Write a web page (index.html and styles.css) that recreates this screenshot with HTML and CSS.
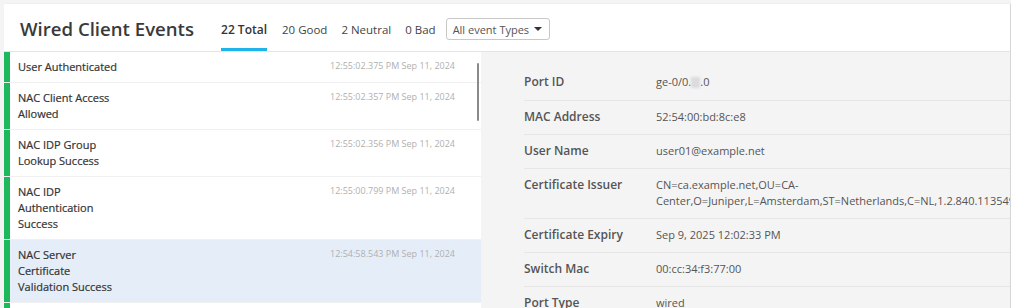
FILE: index.html
```html
<!DOCTYPE html>
<html>
  <head>
    <title>Wired Client Events</title>
    <link rel="stylesheet" href="styles.css">
  </head>
  <body>
    <div class="card">
      <header class="card-header">
        <h1 class="title">Wired Client Events</h1>
        <nav class="tabs">
          <span class="tab active">22 Total</span>
          <span class="tab">20 Good</span>
          <span class="tab">2 Neutral</span>
          <span class="tab">0 Bad</span>
        </nav>
        <div class="select">
          <span>All event Types</span>
          <span class="caret"></span>
        </div>
      </header>

      <div class="card-body">
        <div class="event-list">
          <div class="event">
            <div class="event-name">User Authenticated</div>
            <div class="event-time">12:55:02.375 PM Sep 11, 2024</div>
          </div>
          <div class="event">
            <div class="event-name">NAC Client Access Allowed</div>
            <div class="event-time">12:55:02.357 PM Sep 11, 2024</div>
          </div>
          <div class="event">
            <div class="event-name">NAC IDP Group Lookup Success</div>
            <div class="event-time">12:55:02.356 PM Sep 11, 2024</div>
          </div>
          <div class="event">
            <div class="event-name">NAC IDP Authentication Success</div>
            <div class="event-time">12:55:00.799 PM Sep 11, 2024</div>
          </div>
          <div class="event selected">
            <div class="event-name">NAC Server Certificate Validation Success</div>
            <div class="event-time">12:54:58.543 PM Sep 11, 2024</div>
          </div>
          <div class="event">
            <div class="event-name">NAC Client Certificate Validation Success</div>
            <div class="event-time">12:54:58.542 PM Sep 11, 2024</div>
          </div>
          <div class="scrollbar"></div>
        </div>

        <div class="details">
          <div class="detail-row">
            <div class="detail-label">Port ID</div>
            <div class="detail-value">ge-0/0.<span class="redacted">00</span>.0</div>
          </div>
          <div class="detail-row">
            <div class="detail-label">MAC Address</div>
            <div class="detail-value">52:54:00:bd:8c:e8</div>
          </div>
          <div class="detail-row">
            <div class="detail-label">User Name</div>
            <div class="detail-value">user01@example.net</div>
          </div>
          <div class="detail-row">
            <div class="detail-label">Certificate Issuer</div>
            <div class="detail-value">CN=ca.example.net,OU=CA-Center,O=Juniper,L=Amsterdam,ST=Netherlands,C=NL,1.2.840.113549.1.9.1=admin@example.net</div>
          </div>
          <div class="detail-row">
            <div class="detail-label">Certificate Expiry</div>
            <div class="detail-value">Sep 9, 2025 12:02:33 PM</div>
          </div>
          <div class="detail-row">
            <div class="detail-label">Switch Mac</div>
            <div class="detail-value">00:cc:34:f3:77:00</div>
          </div>
          <div class="detail-row">
            <div class="detail-label">Port Type</div>
            <div class="detail-value">wired</div>
          </div>
        </div>
      </div>
    </div>
  </body>
</html>
```

FILE: styles.css
```css
body {
  margin: 0;
  padding: 4px 1px 0 4px;
  background-color: #f4f4f4;
  font-family: "Open Sans", Arial, sans-serif;
  color: #333;
  height: 308px;
  box-sizing: border-box;
  overflow: hidden;
}
.card {
  background: white;
  height: 100%;
  overflow: hidden;
  box-shadow: 1px 0 1px rgba(0, 0, 0, 0.12);
}
.card-header {
  display: flex;
  align-items: center;
  height: 47px;
  padding-left: 16px;
  border-bottom: 1px solid #e4e4e4;
}
.title {
  margin: 2px 27px 0 0;
  font-size: 18.6px;
  font-weight: 600;
  color: #3a3a3a;
}
.tabs {
  display: flex;
  align-self: stretch;
  gap: 14px;
}
.tab {
  display: flex;
  align-items: center;
  padding-top: 7px;
  font-size: 11.5px;
  color: #444;
  border-bottom: 3px solid transparent;
}
.tab.active {
  margin-right: 1px;
  font-size: 12px;
  font-weight: 600;
  color: #333;
  border-bottom-color: #1fb3ea;
}
.select {
  display: flex;
  align-items: center;
  justify-content: space-between;
  width: 104px;
  height: 22px;
  box-sizing: border-box;
  margin: 3px 0 0 10px;
  padding: 0 7px 0 6px;
  border: 1px solid #c8c8c8;
  border-radius: 3px;
  font-size: 11px;
  color: #555;
}
.caret {
  width: 0;
  height: 0;
  border-left: 4px solid transparent;
  border-right: 4px solid transparent;
  border-top: 4px solid #333;
}
.card-body {
  display: flex;
  height: 260px;
}
.event-list {
  position: relative;
  width: 477px;
  flex-shrink: 0;
  background: #f0f0f0;
}
.event {
  display: flex;
  padding: 7px 26px 7px 8px;
  margin-bottom: 1px;
  background: white;
  border-left: 6px solid #1eb85c;
}
.event.selected {
  background: #e5eef8;
}
.event-name {
  width: 104px;
  font-size: 11px;
  line-height: 16px;
  font-weight: 500;
  color: #333;
  -webkit-text-stroke: 0.2px #333;
}
.event-time {
  margin-left: auto;
  font-size: 9px;
  line-height: 13px;
  color: #b0b0b0;
}
.scrollbar {
  position: absolute;
  top: 11px;
  right: 2px;
  width: 2px;
  height: 58px;
  background: #8a8a8a;
  border-radius: 1px;
}
.details {
  flex: 1;
  padding: 14px 0 0 43px;
  background: #f4f4f4;
  overflow: hidden;
}
.detail-row {
  display: flex;
  padding: 8px 0 9px;
  border-bottom: 1px solid #e6e6e6;
  font-size: 12px;
  line-height: 16px;
  color: #555;
}
.detail-label {
  width: 132px;
  flex-shrink: 0;
  font-weight: 600;
}
.detail-value {
  width: 340px;
  flex-shrink: 0;
  font-size: 11px;
}
.redacted {
  color: transparent;
  background: #dcdcdc;
  filter: blur(1px);
  font-size: 8px;
}
```
